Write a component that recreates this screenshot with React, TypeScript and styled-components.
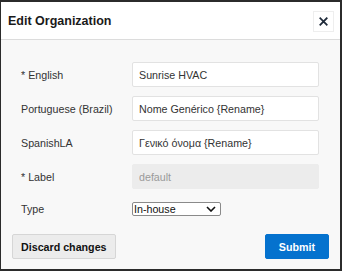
import React from "react";
import styled, { createGlobalStyle } from "styled-components";

const Global = createGlobalStyle`
  html, body { margin: 0; padding: 0; background: #fff; }
  body { font-family: "Liberation Sans", Arial, sans-serif; }
  * { box-sizing: border-box; }
`;

const Dialog = styled.div`
  width: 342px;
  height: 271px;
  border-top: 2px solid #2b2b2b;
  border-left: 1px solid #2b2b2b;
  border-right: 2px solid #2b2b2b;
  border-bottom: 2px solid #2b2b2b;
  background: #f8f8f8;
  display: flex;
  flex-direction: column;
`;

const Header = styled.div`
  height: 38px;
  background: #fff;
  border-bottom: 1px solid #dcdcdc;
  display: flex;
  align-items: center;
  justify-content: space-between;
  padding: 1px 6px 0 7px;
`;

const Title = styled.h1`
  margin: 0;
  font-size: 12.5px;
  font-weight: bold;
  color: #1a1a1a;
`;

const CloseButton = styled.button`
  width: 21px;
  height: 21px;
  border: 1px solid #eeeeee;
  background: #fff;
  padding: 0;
  display: flex;
  align-items: center;
  justify-content: center;
`;

const Form = styled.div`
  display: flex;
  flex-direction: column;
  gap: 9px;
  padding: 22px 22px 0 20px;
`;

const Row = styled.div`
  display: grid;
  grid-template-columns: 111px 187px;
  align-items: center;
  height: 25px;
`;

const Label = styled.label<{ $raise?: boolean }>`
  font-size: 10.7px;
  color: #333;
  margin-top: ${(p) => (p.$raise ? "-4px" : "0")};
`;

const Input = styled.input<{ $disabled?: boolean }>`
  height: 25px;
  width: 187px;
  border: 1px solid ${(p) => (p.$disabled ? "#ececec" : "#e2e2e2")};
  background: ${(p) => (p.$disabled ? "#ececec" : "#fff")};
  border-radius: 2px;
  padding: 0 6px;
  font-family: "Liberation Sans", Arial, sans-serif;
  font-size: 10.7px;
  color: ${(p) => (p.$disabled ? "#9a9a9a" : "#333")};
  outline: none;
`;

const SelectBox = styled.div`
  width: 89px;
  height: 14px;
  border: 1px solid #8a8a8a;
  border-radius: 2px;
  background: #fff;
  display: flex;
  align-items: center;
  justify-content: space-between;
  padding: 0 4px 0 1px;
  font-size: 10.7px;
  color: #111;
  margin-top: -4px;
`;

const Footer = styled.div`
  margin-top: auto;
  display: flex;
  justify-content: space-between;
  align-items: center;
  padding: 0 11px 10px 11px;
`;

const Button = styled.button<{ $primary?: boolean }>`
  height: 25px;
  border-radius: 2px;
  border: 1px solid ${(p) => (p.$primary ? "#0572ce" : "#d6d6d6")};
  background: ${(p) => (p.$primary ? "#0572ce" : "#ececec")};
  color: ${(p) => (p.$primary ? "#fff" : "#111")};
  font-family: "Liberation Sans", Arial, sans-serif;
  font-size: 10.7px;
  font-weight: bold;
  padding: 0 ${(p) => (p.$primary ? "13px" : "8px")};
`;

const fields = [
  { label: "* English", value: "Sunrise HVAC" },
  { label: "Portuguese (Brazil)", value: "Nome Genérico {Rename}" },
  { label: "SpanishLA", value: "Γενικό όνομα {Rename}" },
];

export default function App() {
  return (
    <>
      <Global />
      <Dialog>
        <Header>
          <Title>Edit Organization</Title>
          <CloseButton aria-label="Close">
            <svg width="9" height="9" viewBox="0 0 10 10">
              <path d="M1.5 1.5 L8.5 8.5 M8.5 1.5 L1.5 8.5" stroke="#1f2a3a" strokeWidth="2" strokeLinecap="square" />
            </svg>
          </CloseButton>
        </Header>
        <Form>
          {fields.map((f) => (
            <Row key={f.label}>
              <Label>{f.label}</Label>
              <Input defaultValue={f.value} />
            </Row>
          ))}
          <Row>
            <Label>* Label</Label>
            <Input $disabled value="default" readOnly />
          </Row>
          <Row>
            <Label $raise>Type</Label>
            <SelectBox>
              <span>In-house</span>
              <svg width="10" height="6" viewBox="0 0 10 6">
                <path d="M1 1 L5 5 L9 1" stroke="#111" strokeWidth="1.6" fill="none" />
              </svg>
            </SelectBox>
          </Row>
        </Form>
        <Footer>
          <Button>Discard changes</Button>
          <Button $primary>Submit</Button>
        </Footer>
      </Dialog>
    </>
  );
}
